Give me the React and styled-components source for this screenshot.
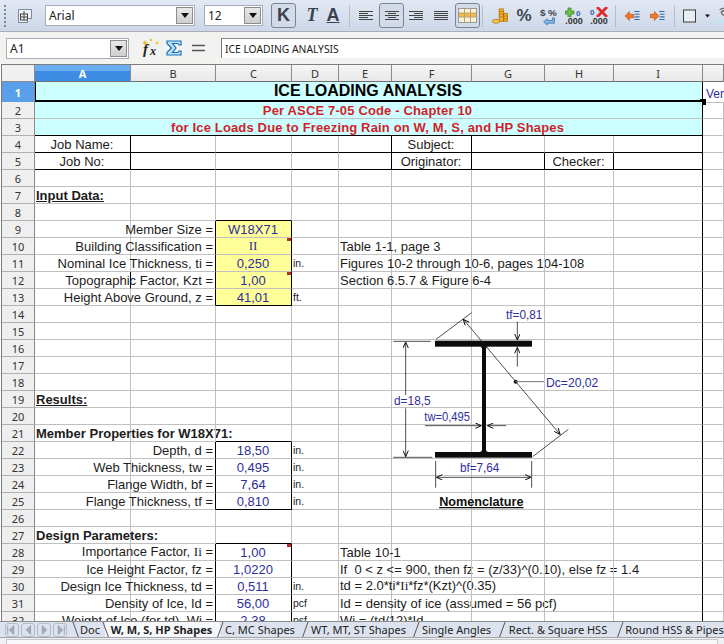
import React from "react";
import styled, { createGlobalStyle } from "styled-components";

const INK = "#1c1c1c";
const BLUE = "#2e2e9c";
const RED = "#d01f2a";
const GRID = "#c0c0c0";

const COLUMNS = ["A", "B", "C", "D", "E", "F", "G", "H", "I"];

const label = (t, extra) => ({ t, align: "right", ...extra });
const box = (t, extra) => ({ t, align: "center", tone: BLUE, r: 1, ...extra });
const unit = (t) => ({ t, small: true });

// only what differs from an empty cell goes in here
const buildRows = () => ({
  4: {
    A: { t: "Job Name:", align: "center", r: 1, b: 1 },
    B: { b: 1 }, C: { b: 1 }, D: { b: 1 },
    E: { b: 1, r: 1 },
    F: { t: "Subject:", align: "center", r: 1, b: 1 },
    G: { b: 1 }, H: { b: 1 }, I: { b: 1, r: 1 },
  },
  5: {
    A: { t: "Job No:", align: "center", r: 1, b: 1 },
    B: { b: 1 }, C: { b: 1 }, D: { b: 1 },
    E: { b: 1, r: 1 },
    F: { t: "Originator:", align: "center", r: 1, b: 1 },
    G: { b: 1, r: 1 },
    H: { t: "Checker:", align: "center", b: 1, r: 1 },
    I: { b: 1, r: 1 },
  },
  7: { A: { t: "Input Data:", bold: true, under: true } },
  8: { C: { b: 1 } },
  9: { B: label("Member Size =", { r: 1 }), C: box("W18X71", { fill: true }) },
  10: {
    B: label("Building Classification =", { r: 1 }),
    C: box(<Roman>II</Roman>, { fill: true, mark: true }),
    E: { t: "Table 1-1, page 3" },
  },
  11: {
    B: label("Nominal Ice Thickness, ti =", { r: 1 }),
    C: box("0,250", { fill: true }),
    D: unit("in."),
    E: { t: "Figures 10-2 through 10-6, pages 104-108" },
  },
  12: {
    A: { r: 1 },
    B: label("Topographic Factor, Kzt =", { r: 1 }),
    C: box("1,00", { fill: true, mark: true }),
    E: { t: "Section 6.5.7 & Figure 6-4" },
  },
  13: {
    B: label("Height Above Ground, z =", { r: 1 }),
    C: box("41,01", { fill: true, b: 1 }),
    D: unit("ft."),
  },
  19: { A: { t: "Results:", bold: true, under: true } },
  21: {
    A: { t: "Member Properties for W18X71:", bold: true },
    C: { b: 1 },
  },
  22: { B: label("Depth, d =", { r: 1 }), C: box("18,50"), D: unit("in.") },
  23: { B: label("Web Thickness, tw =", { r: 1 }), C: box("0,495"), D: unit("in.") },
  24: { B: label("Flange Width, bf =", { r: 1 }), C: box("7,64"), D: unit("in.") },
  25: { B: label("Flange Thickness, tf =", { r: 1 }), C: box("0,810", { b: 1 }), D: unit("in.") },
  27: { A: { t: "Design Parameters:", bold: true }, C: { b: 1 } },
  28: {
    B: label(<>Importance Factor, <Roman>Ii</Roman> =</>, { r: 1 }),
    C: box("1,00", { mark: true }),
    E: { t: "Table 10-1" },
  },
  29: {
    B: label("Ice Height Factor, fz =", { r: 1 }),
    C: box("1,0220"),
    E: { t: "If  0 < z <= 900, then fz = (z/33)^(0.10), else fz = 1.4" },
  },
  30: {
    B: label("Design Ice Thickness, td =", { r: 1 }),
    C: box("0,511"),
    D: unit("in."),
    E: { t: <>td = 2.0*ti*<Roman>Ii</Roman>*fz*(Kzt)^(0.35)</> },
  },
  31: {
    B: label("Density of Ice, Id =", { r: 1 }),
    C: box("56,00"),
    D: unit("pcf"),
    E: { t: "Id = density of ice (assumed = 56 pcf)" },
  },
  32: {
    B: label("Weight of Ice (for td), Wi =", { r: 1 }),
    C: box("2,38"),
    D: unit("psf"),
    E: { t: "Wi = (td/12)*Id" },
  },
});

const TABS = [
  { name: "Doc", w: 30, pad: 0, back: true },
  { name: "W, M, S, HP Shapes", w: 115, pad: 2, back: true, active: true },
  { name: "C, MC Shapes", w: 85, pad: 5 },
  { name: "WT, MT, ST Shapes", w: 111, pad: 4 },
  { name: "Single Angles", w: 86, pad: 5 },
  { name: "Rect. & Square HSS", w: 118, pad: 6 },
  { name: "Round HSS & Pipes", w: 114, pad: 5 },
];

const NAV_ICONS = [
  "M9 2L4 7l5 5zM2 2v10",
  "M10 2L5 7l5 5z",
  "M5 2l5 5-5 5z",
  "M5 2l5 5-5 5zM12 2v10",
];

const GlyphButton = ({ w, active, ml, children }) => (
  <ToolSlot $w={w} $active={active} $ml={ml}>
    {children}
  </ToolSlot>
);

const AlignIcon = ({ rows }) => (
  <svg width="14" height="12" viewBox="0 0 14 12">
    {rows.map(([x, w], i) => (
      <rect key={i} x={x} y={i * 2 + 1} width={w} height="1" fill="#444" />
    ))}
  </svg>
);

const IndentIcon = ({ flip }) => (
  <svg width="17" height="16" viewBox="0 0 17 16">
    {flip ? (
      <path d="M0 6h5V3l5 5-5 5v-3H0z" fill="#f07a28" stroke="#b54a10" strokeWidth=".7" />
    ) : (
      <path d="M10 6H5V3L0 8l5 5v-3h5z" fill="#f07a28" stroke="#b54a10" strokeWidth=".7" />
    )}
    <path d="M10.500 3h6M11 6h5.500M11 9h5.500M10.500 12h6" stroke="#3a6ea8" strokeWidth="1.200" />
  </svg>
);

const DropButton = () => (
  <DropBox>
    <svg width="8" height="5" viewBox="0 0 8 5">
      <path d="M0 0h8L4 5z" fill="#111" />
    </svg>
  </DropBox>
);

const BeamDrawing = () => (
  <Drawing viewBox="0 0 660 660">
    <defs>
      <marker id="head" markerWidth="22" markerHeight="18" refX="20" refY="9" orient="auto-start-reverse" markerUnits="userSpaceOnUse">
        <path d="M2 1L20 9L2 17" fill="none" stroke="#111" strokeWidth="3" />
      </marker>
    </defs>
    <g fill="#0c0c0c">
      <rect x="165" y="122" width="291" height="18" />
      <rect x="165" y="456" width="291" height="17" />
      <rect x="306" y="136" width="12" height="324" />
      <path d="M298 140q8 0 8 8v-8zM326 140q-8 0-8 8v-8zM298 456q8 0 8-8v8zM326 456q-8 0-8-8v8z" />
      <circle cx="407" cy="245" r="6" />
    </g>
    <g stroke="#222" strokeWidth="2.400" fill="none">
      <path d="M40 124H152M40 472H157M168 118L275 38M458 470L565 388M167 483V563M455 483V563" />
      <path d="M77 285V126" markerEnd="url(#head)" />
      <path d="M77 325V470" markerEnd="url(#head)" />
      <path d="M412 65V120" markerEnd="url(#head)" />
      <path d="M412 200V142" markerEnd="url(#head)" />
      <path d="M135 377H304" markerEnd="url(#head)" />
      <path d="M378 377H322" markerEnd="url(#head)" />
      <path d="M250 58L540 403" markerStart="url(#head)" markerEnd="url(#head)" />
      <path d="M169 532H453" markerStart="url(#head)" markerEnd="url(#head)" />
      <path d="M407 245H492" stroke="#777" strokeWidth="3" />
    </g>
    <DrawingLabel x="378" y="58" textLength="109" lengthAdjust="spacingAndGlyphs">tf=0,81</DrawingLabel>
    <DrawingLabel x="498" y="262" textLength="157" lengthAdjust="spacingAndGlyphs">Dc=20,02</DrawingLabel>
    <DrawingLabel x="42" y="314" textLength="110" lengthAdjust="spacingAndGlyphs">d=18,5</DrawingLabel>
    <DrawingLabel x="133" y="364" textLength="137" lengthAdjust="spacingAndGlyphs">tw=0,495</DrawingLabel>
    <DrawingLabel x="240" y="516" textLength="118" lengthAdjust="spacingAndGlyphs">bf=7,64</DrawingLabel>
    <DrawingTitle x="304" y="618">Nomenclature</DrawingTitle>
  </Drawing>
);

const SheetRow = ({ n }) => {
  const row = ROWS[n] || {};
  return (
    <Row>
      <RowHead>{n}</RowHead>
      {COLUMNS.map((c) => {
        const cell = row[c] || {};
        return (
          <Cell
            key={c}
            $align={cell.align}
            $bold={cell.bold}
            $under={cell.under}
            $tone={cell.tone}
            $small={cell.small}
            $fill={cell.fill}
            $r={cell.r || c === "I"}
            $b={cell.b}
          >
            {cell.t !== undefined && <span>{cell.t}</span>}
            {cell.mark && <Mark />}
          </Cell>
        );
      })}
      <Cell />
    </Row>
  );
};

export default function App() {
  const plainRows = Array.from({ length: 29 }, (_, i) => i + 4);

  return (
    <>
      <GlobalStyle />
      <Page>
        <Toolbar>
          <Grip />
          <GlyphButton w={20} ml={9}>
            <svg width="18" height="16" viewBox="0 0 18 16">
              <path d="M2.500 1.500h13v9l-4 4h-9z" fill="#eef1f6" stroke="#7a8796" />
              <path d="M11.500 14.500v-4h4" fill="#fff" stroke="#7a8796" />
              <rect x="4.500" y="6" width="7" height="6" fill="none" stroke="#444" />
              <path d="M8 3v9M5 9h6" stroke="#444" />
            </svg>
          </GlyphButton>
          <ComboBox $w={150} $ml={10}>
            <ComboText>Arial</ComboText>
            <DropButton />
          </ComboBox>
          <ComboBox $w={59} $ml={9}>
            <ComboText>12</ComboText>
            <DropButton />
          </ComboBox>
          <GlyphButton w={25} active ml={8}>
            <StyleLetter $weight="800">K</StyleLetter>
          </GlyphButton>
          <GlyphButton w={24} ml={4}>
            <StyleLetter $italic $serif>T</StyleLetter>
          </GlyphButton>
          <GlyphButton w={18}>
            <StyleLetter $under>A</StyleLetter>
          </GlyphButton>
          <ToolDivider $ml={7} />
          <GlyphButton w={20} ml={6}>
            <AlignIcon rows={[[0, 14], [0, 9], [0, 14], [0, 9], [0, 14]]} />
          </GlyphButton>
          <GlyphButton w={25} active ml={3}>
            <AlignIcon rows={[[0, 14], [3, 8], [0, 14], [3, 8], [0, 14]]} />
          </GlyphButton>
          <GlyphButton w={20} ml={2}>
            <AlignIcon rows={[[0, 14], [5, 9], [0, 14], [5, 9], [0, 14]]} />
          </GlyphButton>
          <GlyphButton w={20} ml={5}>
            <AlignIcon rows={[[0, 14], [0, 14], [0, 14], [0, 14], [0, 14]]} />
          </GlyphButton>
          <GlyphButton w={25} active ml={4}>
            <svg width="19" height="15" viewBox="0 0 19 15">
              <rect x=".5" y=".5" width="18" height="14" fill="#fbf3d8" stroke="#9a9a9a" />
              <rect x="1" y="5" width="17" height="4" fill="#f4b942" />
              <path d="M6.500 1v13M12.500 1v13M1 5h17M1 9h17" stroke="#b8a27a" />
            </svg>
          </GlyphButton>
          <ToolDivider $ml={2} />
          <GlyphButton w={18} ml={8}>
            <svg width="18" height="20" viewBox="0 0 18 20">
              <path d="M8 2h5v14H8zM13 7h4.500v9H13z" fill="#f2b021" stroke="#a86a10" strokeWidth=".8" />
              <ellipse cx="4.500" cy="16" rx="4.200" ry="2.200" fill="#f5c64a" stroke="#a86a10" strokeWidth=".8" />
              <path d="M8 5h5M8 8h5M8 11h5M13 10h4.500M13 13h4.500" stroke="#a86a10" strokeWidth=".8" />
            </svg>
          </GlyphButton>
          <GlyphButton w={14} ml={8}>
            <Symbol>%</Symbol>
          </GlyphButton>
          <GlyphButton w={20} ml={8}>
            <svg width="20" height="20" viewBox="0 0 20 20">
              <text x="0" y="10" fontSize="11" fontWeight="700" fontFamily="Liberation Sans" fill="#3b4653">$</text>
              <text x="9" y="10" fontSize="11" fontWeight="700" fontFamily="Liberation Sans" fill="#3b4653">%</text>
              <path d="M14 12v3H8v-2l-4 3.500L8 20v-2h8v-6z" fill="#8ab8e8" stroke="#2e6db0" strokeWidth=".8" />
            </svg>
          </GlyphButton>
          <GlyphButton w={18} ml={6}>
            <NumberIcon>
              <svg width="18" height="10" viewBox="0 0 18 10">
                <path d="M3 1h3v3h3v3H6v3H3V7H0V4h3z" fill="#6cc04a" stroke="#2f7d20" strokeWidth=".7" />
                <text x="11" y="9" fontSize="8" fontWeight="700" fontFamily="Liberation Sans" fill="#2e5fb0">0</text>
              </svg>
              <NumberRow>.000</NumberRow>
            </NumberIcon>
          </GlyphButton>
          <GlyphButton w={18} ml={7}>
            <NumberIcon>
              <svg width="18" height="10" viewBox="0 0 18 10">
                <text x="0" y="8" fontSize="8" fontWeight="700" fontFamily="Liberation Sans" fill="#2e5fb0">0</text>
                <path d="M7 0l10 10M17 0L7 10" stroke="#dd2b2b" strokeWidth="2.800" />
              </svg>
              <NumberRow>.000</NumberRow>
            </NumberIcon>
          </GlyphButton>
          <ToolDivider $ml={7} />
          <GlyphButton w={17} ml={8}>
            <IndentIcon />
          </GlyphButton>
          <GlyphButton w={17} ml={8}>
            <IndentIcon flip />
          </GlyphButton>
          <ToolDivider $ml={8} />
          <GlyphButton w={15} ml={7}>
            <svg width="14" height="14" viewBox="0 0 14 14">
              <rect x=".5" y=".5" width="13" height="13" fill="#e9edf4" stroke="#333" />
            </svg>
          </GlyphButton>
          <GlyphButton w={7} ml={7}>
            <svg width="7" height="4" viewBox="0 0 7 4">
              <path d="M0 0h7L3.500 4z" fill="#111" />
            </svg>
          </GlyphButton>
          <GlyphButton w={16} ml={5}>
            <svg width="16" height="20" viewBox="0 0 16 20">
              <path d="M3 3c3-3 8-2 9 2s-4 5-6 3-1-4 2-4" fill="none" stroke="#666" strokeWidth="1.500" />
              <rect x="0" y="14" width="16" height="4" fill="#bfe6f2" />
            </svg>
          </GlyphButton>
        </Toolbar>

        <FormulaBar>
          <ComboBox $w={123} $h={21} $ml={6}>
            <ComboText>A1</ComboText>
            <DropButton />
          </ComboBox>
          <FormulaIcon $ml={13}>
            <svg width="18" height="20" viewBox="0 0 18 20">
              <path d="M3 2l1 2 2 1-2 1-1 2-1-2-2-1 2-1zM9 0l.8 1.500L11 2l-1.200.5L9 4l-.8-1.500L7 2l1.200-.5zM15 3l.8 1.500L17 5l-1.200.5L15 7l-.8-1.500L13 5l1.200-.5z" fill="#e8c020" />
              <text x="1" y="16" fontSize="15" fontStyle="italic" fontFamily="Liberation Serif" fontWeight="700" fill="#222">f</text>
              <text x="8" y="17" fontSize="12" fontStyle="italic" fontFamily="Liberation Serif" fontWeight="700" fill="#222">x</text>
            </svg>
          </FormulaIcon>
          <FormulaIcon $ml={5}>
            <svg width="16" height="16" viewBox="0 0 16 16">
              <path d="M1 1h14v4h-2l-1-1.500H6.500L10 8l-3.500 4.500H12l1-1.500h2v4H1v-2.500L5.500 8 1 3.500z" fill="#bfe2f7" stroke="#1670b8" strokeWidth="1.200" />
            </svg>
          </FormulaIcon>
          <FormulaIcon $ml={6}>
            <svg width="13" height="8" viewBox="0 0 13 8">
              <path d="M0 1.500h13M0 6.500h13" stroke="#555" strokeWidth="1.600" />
            </svg>
          </FormulaIcon>
          <FormulaInput>ICE LOADING ANALYSIS</FormulaInput>
        </FormulaBar>

        <Sheet>
          <HeaderRow>
            <Corner />
            {COLUMNS.map((c) => (
              <ColHead key={c} $active={c === "A"}>{c}</ColHead>
            ))}
            <ColHead />
          </HeaderRow>

          <TitleRow $tall>
            <RowHead $active>1</RowHead>
            <Banner $size={16} $selected>
              ICE LOADING ANALYSIS
              <Handle />
            </Banner>
            <Cell $tone={BLUE}><Ver>Ver</Ver></Cell>
          </TitleRow>
          <TitleRow>
            <RowHead>2</RowHead>
            <Banner $tone={RED}>Per ASCE 7-05 Code - Chapter 10</Banner>
            <Cell />
          </TitleRow>
          <TitleRow>
            <RowHead>3</RowHead>
            <Banner $tone={RED} $closed>for Ice Loads Due to Freezing Rain on W, M, S, and HP Shapes</Banner>
            <Cell />
          </TitleRow>

          {plainRows.map((n) => (
            <SheetRow key={n} n={n} />
          ))}

          <BeamDrawing />
        </Sheet>

        <TabBar>
          <TabNav>
            {NAV_ICONS.map((d) => (
              <NavButton key={d}>
                <svg width="14" height="14" viewBox="0 0 14 14">
                  <path d={d} fill="#a4adba" stroke="#8e98a6" />
                </svg>
              </NavButton>
            ))}
          </TabNav>
          {TABS.map((tab) => (
            <Tab key={tab.name} $w={tab.w} $pad={tab.pad} $active={tab.active} $back={tab.back}>
              {tab.name}
            </Tab>
          ))}
        </TabBar>
        <ScrollStrip>
          <ScrollTrack />
        </ScrollStrip>
      </Page>
    </>
  );
}

const GlobalStyle = createGlobalStyle`
  html, body {
    margin: 0;
    padding: 0;
    background: #fff;
    overflow: hidden;
  }
  * {
    box-sizing: border-box;
  }
`;

const Page = styled.div`
  width: 724px;
  height: 644px;
  display: flex;
  flex-direction: column;
  overflow: hidden;
  font-family: "Liberation Sans", Arial, sans-serif;
  color: ${INK};
`;

const Toolbar = styled.div`
  height: 32px;
  flex: none;
  display: flex;
  align-items: center;
  padding-left: 4px;
  overflow: hidden;
  background: linear-gradient(#e3e9f3, #cdd7e8);
  border-bottom: 1px solid #a9adb4;
`;

const Grip = styled.div`
  width: 2px;
  height: 22px;
  flex: none;
  background: repeating-linear-gradient(#7d8794 0 2px, transparent 2px 4px);
`;

const ToolSlot = styled.div`
  width: ${(p) => p.$w}px;
  height: 25px;
  flex: none;
  margin-left: ${(p) => p.$ml || 0}px;
  display: flex;
  align-items: center;
  justify-content: center;
  border-radius: 3px;
  border: 1px solid ${(p) => (p.$active ? "#7b8494" : "transparent")};
  background: ${(p) => (p.$active ? "#d3dbe9" : "transparent")};
`;

const ToolDivider = styled.div`
  width: 1px;
  height: 22px;
  flex: none;
  margin-left: ${(p) => p.$ml}px;
  background: #b5bdc9;
`;

const ComboBox = styled.div`
  width: ${(p) => p.$w}px;
  height: ${(p) => p.$h || 21}px;
  flex: none;
  margin-left: ${(p) => p.$ml}px;
  display: flex;
  align-items: center;
  justify-content: space-between;
  padding: 1px 1px 1px 3px;
  background: #fff;
  border: 1px solid #a8aeb8;
`;

const ComboText = styled.span`
  font-family: "Noto Sans", sans-serif;
  font-size: 12px;
  color: #222;
`;

const DropBox = styled.div`
  width: 17px;
  height: 17px;
  display: flex;
  align-items: center;
  justify-content: center;
  background: linear-gradient(#e8e8e8, #cfcfcf);
  border: 1px solid #8c8c8c;
`;

const StyleLetter = styled.span`
  font-family: ${(p) => (p.$serif ? '"Liberation Serif", serif' : '"Liberation Sans", sans-serif')};
  font-size: 18px;
  font-weight: ${(p) => p.$weight || 700};
  font-style: ${(p) => (p.$italic ? "italic" : "normal")};
  color: #3a4250;
  text-decoration: ${(p) => (p.$under ? "underline" : "none")};
`;

const Symbol = styled.span`
  font-size: 17px;
  font-weight: 700;
  color: #3b4653;
`;

const NumberIcon = styled.div`
  display: flex;
  flex-direction: column;
  align-items: center;
  line-height: 8px;
`;

const NumberRow = styled.span`
  font-size: 9px;
  font-weight: 700;
  color: #333;
`;

const FormulaBar = styled.div`
  height: 32px;
  flex: none;
  display: flex;
  align-items: center;
  background: #f2f2f0;
`;

const FormulaIcon = styled.div`
  flex: none;
  margin-left: ${(p) => p.$ml}px;
  width: 18px;
  display: flex;
  justify-content: center;
`;

const FormulaInput = styled.div`
  flex: 1;
  height: 20px;
  margin-left: 14px;
  padding-left: 3px;
  display: flex;
  align-items: center;
  font-family: "Noto Sans", sans-serif;
  font-size: 10.3px;
  background: #fff;
  border-left: 1px solid #777;
  border-top: 1px solid #888;
`;

const Sheet = styled.div`
  position: relative;
  flex: 1;
  min-height: 0;
  overflow: hidden;
  margin-left: 1px;
  background: #fff;
  border-left: 1px solid #7c7c7c;
  border-top: 1px solid #7c7c7c;
`;

const tracks = "33px 96px 85px 76px 47px 53px 80px 73px 69px 89px 1fr";

const HeaderRow = styled.div`
  display: grid;
  grid-template-columns: ${tracks};
  height: 17px;
`;

const Corner = styled.div`
  background: #f0f0f0;
  border-right: 1px solid #8a8a8a;
  border-bottom: 1px solid #8a8a8a;
`;

const ColHead = styled.div`
  display: flex;
  align-items: center;
  justify-content: center;
  font-family: "Noto Sans", sans-serif;
  font-size: 11px;
  font-weight: ${(p) => (p.$active ? 700 : 400)};
  color: ${(p) => (p.$active ? "#fff" : "#333")};
  background: ${(p) =>
    p.$active
      ? "linear-gradient(#6aaef2 0 40%, #3f8ce4 40%)"
      : "linear-gradient(#f6f6f6, #e8e8e8)"};
  border-right: 1px solid #8a8a8a;
  border-bottom: 1px solid #6f6f6f;
`;

const Row = styled.div`
  display: grid;
  grid-template-columns: ${tracks};
  height: 17px;
`;

const TitleRow = styled(Row)`
  height: ${(p) => (p.$tall ? 20 : 17)}px;
`;

const RowHead = styled.div`
  display: flex;
  align-items: center;
  justify-content: center;
  font-family: "Noto Sans", sans-serif;
  font-size: 11px;
  font-weight: ${(p) => (p.$active ? 700 : 400)};
  color: ${(p) => (p.$active ? "#fff" : "#333")};
  background: ${(p) => (p.$active ? "#5a9fea" : "#efefef")};
  border-right: 1px solid #8a8a8a;
  border-bottom: 1px solid #b0b0b0;
`;

const Cell = styled.div`
  position: relative;
  display: flex;
  align-items: center;
  justify-content: ${(p) =>
    p.$align === "right" ? "flex-end" : p.$align === "center" ? "center" : "flex-start"};
  padding: 0 2px 0 1px;
  white-space: pre;
  font-size: ${(p) => (p.$small ? 10.5 : 13)}px;
  font-weight: ${(p) => (p.$bold ? 700 : 400)};
  text-decoration: ${(p) => (p.$under ? "underline" : "none")};
  color: ${(p) => p.$tone || INK};
  background: ${(p) => (p.$fill ? "#ffff99" : "transparent")};
  border-right: 1px solid ${(p) => (p.$r ? "#000" : GRID)};
  border-bottom: 1px solid ${(p) => (p.$b ? "#000" : GRID)};
`;

const Banner = styled.div`
  position: relative;
  z-index: 1;
  grid-column: span 9;
  display: flex;
  align-items: center;
  justify-content: center;
  padding-right: 2px;
  white-space: nowrap;
  font-size: ${(p) => p.$size || 13}px;
  font-weight: 700;
  letter-spacing: ${(p) => (p.$size ? 0 : 0.15)}px;
  color: ${(p) => p.$tone || "#000"};
  background: #ccffff;
  border-right: 1px solid #000;
  border-left: ${(p) => (p.$selected ? "1px solid #000" : "none")};
  border-bottom: ${(p) =>
    p.$selected ? "3px solid #000" : p.$closed ? "1px solid #000" : `1px solid ${GRID}`};
`;

const Handle = styled.i`
  position: absolute;
  right: -4px;
  bottom: -5px;
  width: 6px;
  height: 6px;
  background: #000;
`;

const Ver = styled.span`
  font-size: 12px;
  padding-left: 2px;
  padding-top: 3px;
`;

const Roman = styled.span`
  font-family: "Liberation Serif", serif;
`;

const Mark = styled.i`
  position: absolute;
  top: 0;
  right: 0;
  width: 4px;
  height: 3px;
  background: #c0272d;
`;

const Drawing = styled.svg`
  position: absolute;
  left: 378px;
  top: 235px;
  width: 220px;
  height: 220px;
`;

const DrawingLabel = styled.text`
  font-family: "Liberation Sans", sans-serif;
  font-size: 38px;
  fill: ${BLUE};
`;

const DrawingTitle = styled.text`
  font-family: "Liberation Sans", sans-serif;
  font-size: 38px;
  font-weight: 700;
  fill: #111;
  text-anchor: middle;
  text-decoration: underline;
`;

const TabBar = styled.div`
  height: 17px;
  flex: none;
  display: flex;
  align-items: stretch;
  overflow: hidden;
  background: #dde3ee;
  border-top: 1px solid #8c8c8c;
  border-bottom: 1px solid #a4a4a4;
`;

const TabNav = styled.div`
  width: 75px;
  flex: none;
  display: flex;
  align-items: center;
  gap: 2px;
  padding-left: 5px;
`;

const NavButton = styled.div`
  width: 14px;
  height: 14px;
  display: flex;
  align-items: center;
  justify-content: center;
  border: 1px solid #b4bcc9;
  border-radius: 3px;
`;

const Tab = styled.div`
  position: relative;
  width: ${(p) => p.$w}px;
  flex: none;
  display: flex;
  align-items: center;
  justify-content: center;
  padding-right: ${(p) => p.$pad}px;
  white-space: nowrap;
  font-family: "Noto Sans", sans-serif;
  font-size: 11px;
  font-weight: ${(p) => (p.$active ? 700 : 400)};
  color: #222;
  background: ${(p) => (p.$active ? "#f7f8fb" : "transparent")};

  &::before {
    content: "";
    position: absolute;
    left: 0;
    top: -1px;
    bottom: 0;
    width: 1px;
    background: #555;
    transform: skewX(${(p) => (p.$back ? 20 : -20)}deg);
  }
`;

const ScrollStrip = styled.div`
  height: 6px;
  flex: none;
  padding: 1px 6px 0;
  background: #eef0f3;
`;

const ScrollTrack = styled.div`
  height: 100%;
  background: #f8f8f8;
  border: 1px solid #c4c8ce;
  border-bottom: none;
`;

const ROWS = buildRows();
